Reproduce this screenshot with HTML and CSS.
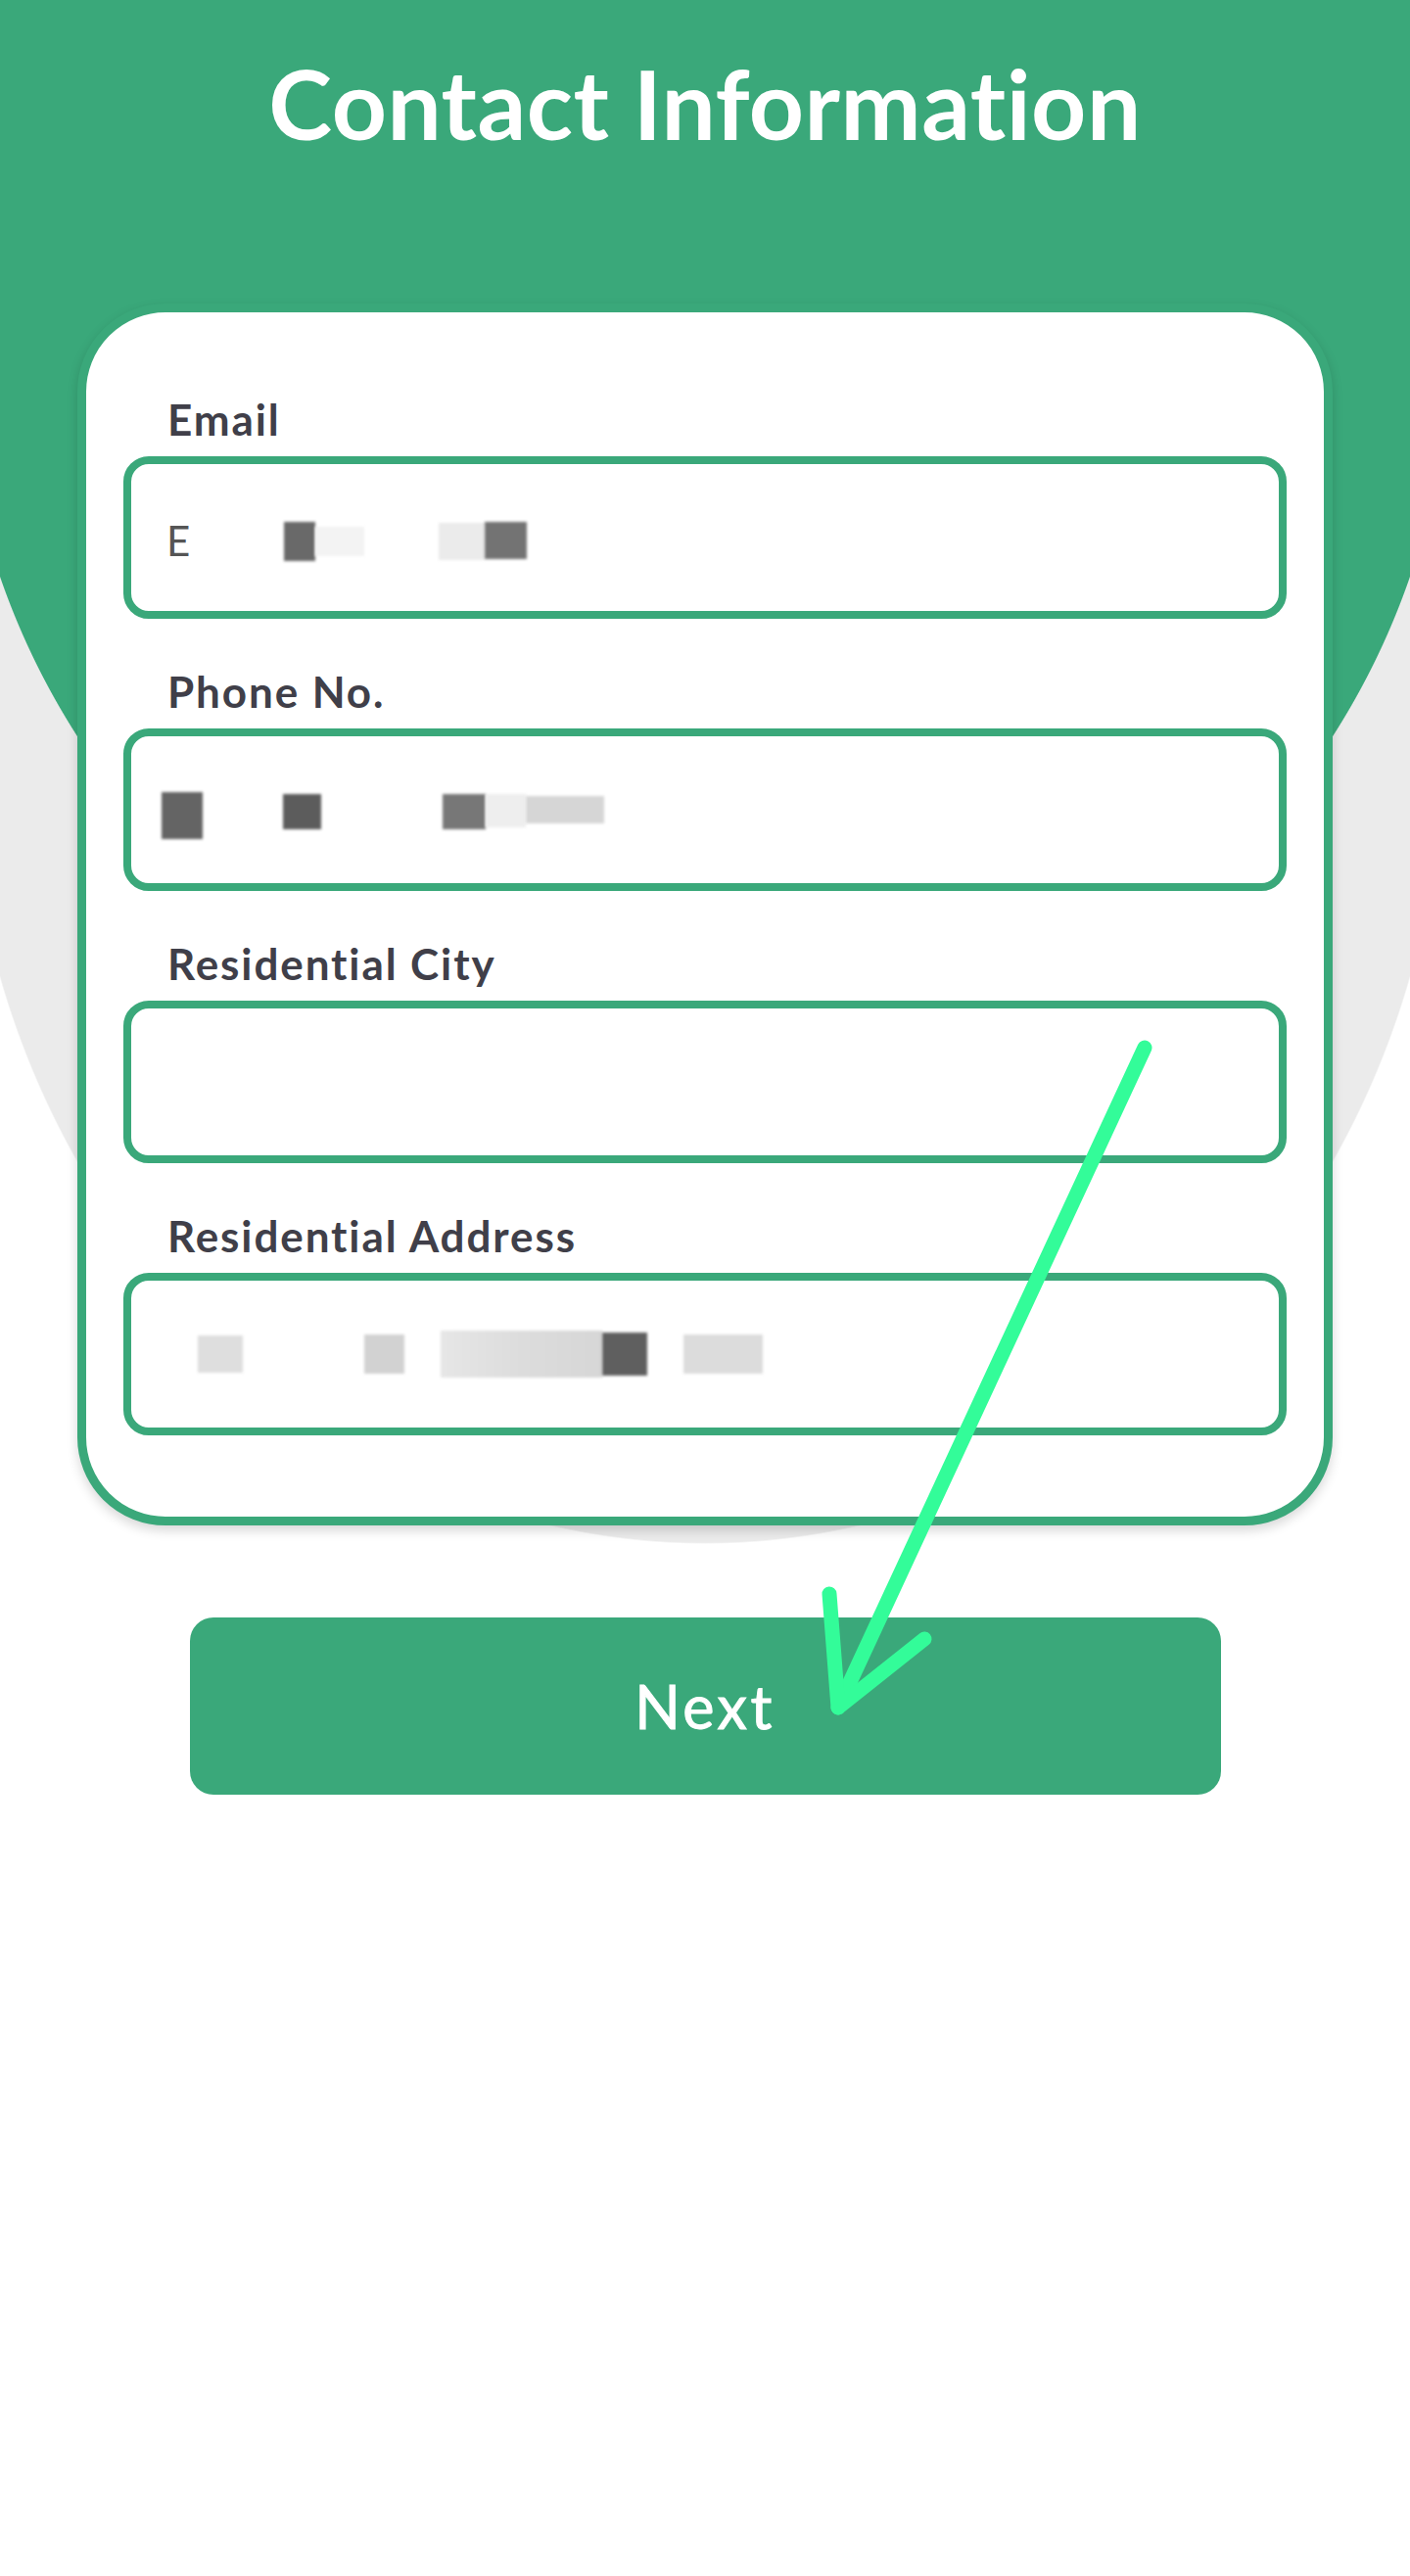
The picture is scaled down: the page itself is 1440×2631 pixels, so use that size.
FILE: index.html
```html
<!DOCTYPE html>
<html lang="en">
<head>
<meta charset="utf-8">
<title>Contact Information</title>
<link rel="stylesheet" href="styles.css">
</head>
<body>
<div class="page">
  <h1 class="title">Contact Information</h1>
  <div class="card">
    <div class="field">
      <label class="label">Email</label>
      <div class="input">
        <span class="ph">E</span>
        <span class="blk e1"></span><span class="blk e2"></span><span class="blk e3"></span><span class="blk e4"></span>
      </div>
    </div>
    <div class="field">
      <label class="label">Phone No.</label>
      <div class="input input-raw">
        <span class="blk p1"></span><span class="blk p2"></span><span class="blk p3"></span><span class="blk p4"></span><span class="blk p5"></span>
      </div>
    </div>
    <div class="field">
      <label class="label">Residential City</label>
      <div class="input"></div>
    </div>
    <div class="field">
      <label class="label">Residential Address</label>
      <div class="input input-raw">
        <span class="blk a1"></span><span class="blk a3"></span><span class="blk a4"></span><span class="blk a5"></span><span class="blk a6"></span>
      </div>
    </div>
  </div>
  <button class="next" type="button">Next</button>
  <svg class="arrow" width="1440" height="1900" viewBox="0 0 1440 1900" aria-hidden="true">
    <path d="M1169 1070 L856 1744" />
    <path d="M847 1628 L856 1744 L944 1674" />
  </svg>
</div>
</body>
</html>
```
FILE: styles.css
```css
* { box-sizing: border-box; }
html, body { margin: 0; padding: 0; background: #fff; }
body { font-family: Lato, "Noto Sans", sans-serif; }

.page {
  position: relative;
  width: 1440px;
  min-height: 2631px;
  padding-top: 46px;
  background:
    linear-gradient(#3aa87a, #3aa87a) 0 0 / 100% 345px no-repeat,
    radial-gradient(circle 762px at 720px 341px, #3aa87a 761px, rgba(58,168,122,0) 762px) no-repeat,
    radial-gradient(755px 825px at 720px 752px, #ebebeb 99.8%, rgba(235,235,235,0) 100%) no-repeat,
    #fff;
}

.title {
  margin: 0;
  text-align: center;
  color: #fff;
  font-family: Lato, "Noto Sans", sans-serif;
  font-weight: 700;
  font-size: 98px;
  line-height: 118px;
  letter-spacing: 0.5px;
}

.card {
  width: 1282px;
  margin: 146px auto 0;
  background: #fff;
  border: 9px solid #3aa87a;
  border-radius: 90px;
  padding: 83px 38px;
  box-shadow: 0 5px 12px rgba(0, 0, 0, 0.16);
}

.field + .field { margin-top: 48px; }

.label {
  display: block;
  padding-left: 45px;
  margin-bottom: 12px;
  font-weight: 700;
  font-size: 44px;
  line-height: 52px;
  letter-spacing: 1.9px;
  color: #403f49;
}

.input {
  height: 166px;
  border: 8px solid #3aa87a;
  border-radius: 26px;
  display: flex;
  align-items: center;
  padding-left: 36px;
}
.input-raw { padding-left: 0; }

.ph {
  font-size: 42px;
  font-weight: 400;
  color: #555;
  width: 24px;
  line-height: 1;
  margin-top: 6px;
}

.blk { display: inline-block; flex: none; filter: blur(1.5px); }

.e1 { margin-left: 96px; width: 32px; height: 40px; background: #696969; margin-top: 8px; }
.e2 { width: 50px; height: 30px; background: #f3f3f3; margin-top: 8px; }
.e3 { margin-left: 76px; width: 47px; height: 38px; background: #ebebeb; margin-top: 8px; }
.e4 { width: 43px; height: 38px; background: #737373; margin-top: 6px; }

.p1 { margin-left: 31px; width: 42px; height: 48px; background: #646464; margin-top: 12px; }
.p2 { margin-left: 82px; width: 39px; height: 36px; background: #5c5c5c; margin-top: 4px; }
.p3 { margin-left: 124px; width: 44px; height: 36px; background: #777; margin-top: 4px; }
.p4 { width: 41px; height: 34px; background: #eee; margin-top: 2px; }
.p5 { width: 80px; height: 28px; background: #d6d6d6; }

.a1 { margin-left: 68px; width: 46px; height: 38px; background: #dedede; }
.a3 { margin-left: 124px; width: 41px; height: 40px; background: #d2d2d2; }
.a4 { margin-left: 37px; width: 165px; height: 48px; background: linear-gradient(90deg, #e6e6e6, #dcdcdc 50%, #d6d6d6); }
.a5 { width: 46px; height: 44px; background: #5f5f5f; }
.a6 { margin-left: 37px; width: 81px; height: 40px; background: #dcdcdc; }

.next {
  display: block;
  width: 1053px;
  height: 181px;
  margin: 94px auto 0;
  padding: 0;
  border: none;
  border-radius: 24px;
  background: #3aa87a;
  color: #fff;
  font-family: Lato, "Noto Sans", sans-serif;
  font-weight: 400;
  font-size: 61px;
  letter-spacing: 3.5px;
  -webkit-text-stroke: 1px #fff;
  cursor: pointer;
}

.arrow {
  position: absolute;
  left: 0;
  top: 0;
  pointer-events: none;
  fill: none;
  stroke: #33fc99;
  stroke-width: 15;
  stroke-linecap: round;
  stroke-linejoin: round;
}
```
